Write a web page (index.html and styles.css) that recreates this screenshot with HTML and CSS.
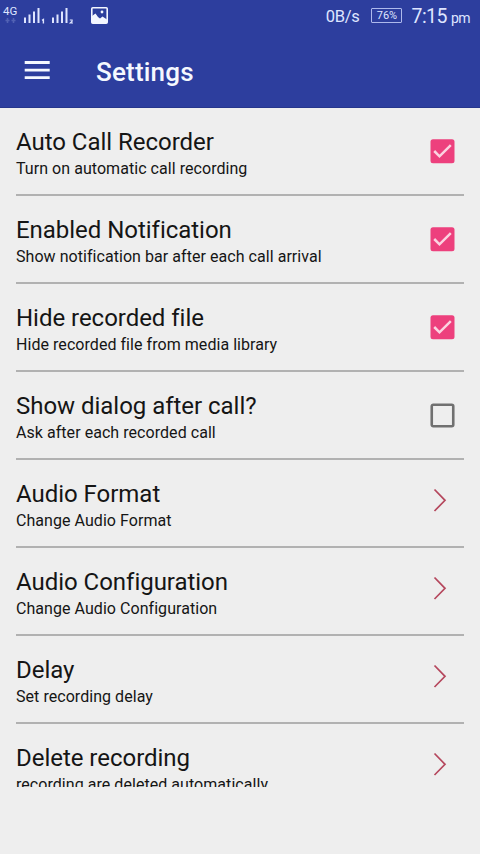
FILE: index.html
```html
<!DOCTYPE html>
<html lang="en">
<head>
<meta charset="utf-8">
<title>Settings</title>
<link rel="stylesheet" href="styles.css">
</head>
<body>
<svg class="defs" width="0" height="0">
  <symbol id="check" viewBox="0 0 25 25"><rect x=".5" y=".2" width="24" height="24" rx="2.5" fill="#ed407d"/><path d="M4.2 12l5.3 5.3L20.8 6.2" fill="none" stroke="#fbd3e1" stroke-width="2.5"/></symbol>
  <symbol id="empty" viewBox="0 0 25 25"><rect x="1.75" y="1.75" width="21.5" height="21.5" rx="1.5" fill="none" stroke="#707070" stroke-width="2.6"/></symbol>
  <symbol id="chevron" viewBox="0 0 14 24"><path d="M1.5 1.5L12 12.3 1.5 23" fill="none" stroke="#b5475d" stroke-width="1.7"/></symbol>
</svg>
<header class="top">
  <div class="status">
    <div class="network"><span>4G</span><svg width="14" height="7" viewBox="0 0 14 7"><path d="M4.5 1v5M2.5 3.5h4M10.5 1v5M8.5 3.5h4" stroke="#5262b4" stroke-width="1.6"/></svg></div>
    <svg class="signal" width="23" height="16" viewBox="0 0 23 16"><path d="M1 9.5V15M5.5 6.5V15M10 3.5V15M14.5 0V15" stroke="#dfe5ff" stroke-width="2"/><path d="M18 12.3l1.4-.8v4" fill="none" stroke="#dfe5ff" stroke-width="1.4"/></svg>
    <svg class="signal" width="23" height="16" viewBox="0 0 23 16"><path d="M1 9.5V15M5.5 6.5V15M10 3.5V15M14.5 0V15" stroke="#dfe5ff" stroke-width="2"/><path d="M17.8 12h2.3v1.2l-1.8 1.8h2.7" fill="none" stroke="#dfe5ff" stroke-width="1.2"/></svg>
    <svg class="photo" width="17" height="17" viewBox="0 0 17 17"><rect x=".8" y=".8" width="15.4" height="15.4" rx="1" fill="#2c3e9c" stroke="#f3f6ff" stroke-width="1.6"/><path d="M1 16V9l3.5-2.5L7 10l2 1.5 2.5-2 4.5 3V16z" fill="#f3f6ff"/><circle cx="11" cy="5" r="1.4" fill="#f3f6ff"/></svg>
    <span class="speed">0B/s</span>
    <span class="battery">76%</span>
    <span class="time">7:15</span><span class="pm">pm</span>
  </div>
  <div class="bar">
    <svg width="26" height="20" viewBox="0 0 26 20"><path d="M.7 2.5h25M.7 10.2h25M.7 17.7h25" stroke="#f5f8ff" stroke-width="2.8"/></svg>
    <h1>Settings</h1>
  </div>
</header>
<main class="list">
  <section class="row"><div><h2>Auto Call Recorder</h2><p>Turn on automatic call recording</p></div><svg class="box"><use href="#check"/></svg></section>
  <section class="row"><div><h2>Enabled Notification</h2><p>Show notification bar after each call arrival</p></div><svg class="box"><use href="#check"/></svg></section>
  <section class="row"><div><h2>Hide recorded file</h2><p>Hide recorded file from media library</p></div><svg class="box"><use href="#check"/></svg></section>
  <section class="row"><div><h2>Show dialog after call?</h2><p>Ask after each recorded call</p></div><svg class="box"><use href="#empty"/></svg></section>
  <section class="row"><div><h2>Audio Format</h2><p>Change Audio Format</p></div><svg class="arrow"><use href="#chevron"/></svg></section>
  <section class="row"><div><h2>Audio Configuration</h2><p>Change Audio Configuration</p></div><svg class="arrow"><use href="#chevron"/></svg></section>
  <section class="row"><div><h2>Delay</h2><p>Set recording delay</p></div><svg class="arrow"><use href="#chevron"/></svg></section>
  <section class="row"><div><h2>Delete recording</h2><p>recording are deleted automatically</p></div><svg class="arrow"><use href="#chevron"/></svg></section>
</main>
</body>
</html>
```
FILE: styles.css
```css
* { box-sizing: border-box; }
body { margin: 0; background: #eee; color: #151515; font-family: Roboto, sans-serif; }
h1, h2, p { margin: 0; font-weight: 400; }
svg { display: block; flex: none; }
.defs { position: absolute; }
.top { height: 108px; background: #2d3e9e; color: #f5f8ff; border-bottom: 1px solid #26368c; }
.status { display: flex; height: 32px; align-items: center; padding: 0 10px 0 3px; color: #dfe5ff; }
.network { width: 16px; margin: -2px 5px 0 0; }
.network span { display: block; font-size: 11.5px; line-height: 11px; }
.signal { margin: -1px 5px 0 0; }
.photo { margin: -2px 0 0 11px; }
.speed { margin-left: auto; font-size: 16.5px; letter-spacing: -.3px; }
.battery { width: 31px; height: 15px; margin: 0 9px 2px 12px; border: 1px solid #aeb9ec; border-radius: 1px; font-size: 11px; line-height: 14px; text-align: center; }
.time { font-size: 19.5px; letter-spacing: -.5px; }
.pm { margin: 3px 0 0 4px; font-size: 14px; letter-spacing: -.6px; }
.bar { display: flex; align-items: center; height: 76px; padding-left: 24px; gap: 46px; }
h1 { margin-top: 4px; font-size: 26px; line-height: 32px; font-weight: 500; letter-spacing: .2px; }
.list { height: 679px; padding: 0 16px; overflow: hidden; }
.row { display: flex; justify-content: space-between; height: 88px; padding-top: 20px; border-bottom: 2px solid #b1b1b1; }
h2 { font-size: 24px; line-height: 28px; letter-spacing: -.03px; }
p { margin-top: 3px; font-size: 16px; line-height: 20px; letter-spacing: .05px; }
.box { width: 25px; height: 25px; margin: 11px 9px 0 0; }
.arrow { width: 14px; height: 24px; margin: 8px 17px 0 0; }
```
